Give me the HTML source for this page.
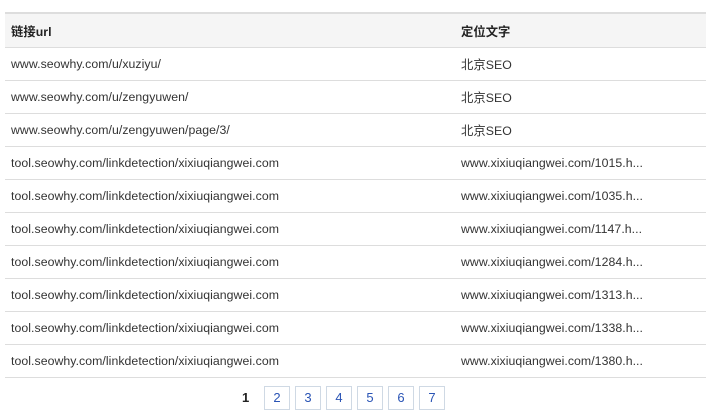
<!DOCTYPE html><html><head><style>
body{margin:0;background:#fff;font-family:"Liberation Sans","Noto Sans CJK SC",sans-serif;font-size:12.3px;color:#333}
table{position:absolute;left:5px;top:12px;width:701px;border-collapse:collapse}
td,th{height:32px;padding:0 0 0 6px;text-align:left;border-top:1px solid #ddd;white-space:nowrap;letter-spacing:0.05px}
th{background:#f5f5f5;height:33px;border-top:2px solid #ddd;font-weight:bold;color:#222}
td:first-child,th:first-child{width:444px}
tr:last-child td{border-bottom:1px solid #ddd}
.p{position:absolute;top:386px;height:24px;width:26px;box-sizing:border-box;border:1px solid #cfd9e4;color:#2a54b5;text-align:center;line-height:22px;font-size:13px}
</style></head><body>
<table>
<tr><th>链接url</th><th>定位文字</th></tr>
<tr><td>www.seowhy.com/u/xuziyu/</td><td>北京SEO</td></tr>
<tr><td>www.seowhy.com/u/zengyuwen/</td><td>北京SEO</td></tr>
<tr><td>www.seowhy.com/u/zengyuwen/page/3/</td><td>北京SEO</td></tr>
<tr><td>tool.seowhy.com/linkdetection/xixiuqiangwei.com</td><td>www.xixiuqiangwei.com/1015.h...</td></tr>
<tr><td>tool.seowhy.com/linkdetection/xixiuqiangwei.com</td><td>www.xixiuqiangwei.com/1035.h...</td></tr>
<tr><td>tool.seowhy.com/linkdetection/xixiuqiangwei.com</td><td>www.xixiuqiangwei.com/1147.h...</td></tr>
<tr><td>tool.seowhy.com/linkdetection/xixiuqiangwei.com</td><td>www.xixiuqiangwei.com/1284.h...</td></tr>
<tr><td>tool.seowhy.com/linkdetection/xixiuqiangwei.com</td><td>www.xixiuqiangwei.com/1313.h...</td></tr>
<tr><td>tool.seowhy.com/linkdetection/xixiuqiangwei.com</td><td>www.xixiuqiangwei.com/1338.h...</td></tr>
<tr><td>tool.seowhy.com/linkdetection/xixiuqiangwei.com</td><td>www.xixiuqiangwei.com/1380.h...</td></tr>
</table>
<div style="position:absolute;left:242px;top:386px;line-height:24px;font-weight:bold;font-size:13px;color:#222">1</div>
<div class="p" style="left:264px">2</div><div class="p" style="left:295px">3</div><div class="p" style="left:326px">4</div><div class="p" style="left:357px">5</div><div class="p" style="left:388px">6</div><div class="p" style="left:419px">7</div>
</body></html>
